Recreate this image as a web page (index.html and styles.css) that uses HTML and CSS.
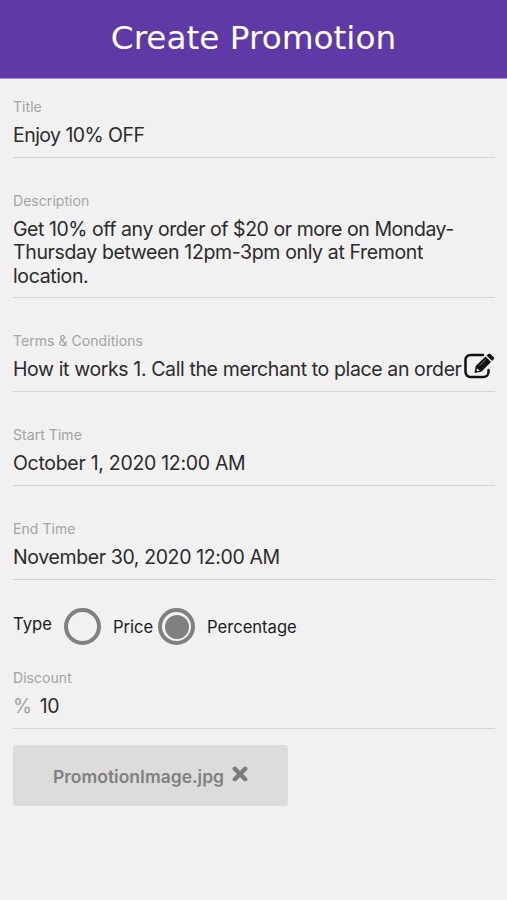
FILE: index.html
```html
<!DOCTYPE html>
<html lang="en">
<head>
  <meta charset="UTF-8" />
  <meta name="viewport" content="width=device-width, initial-scale=1.0"/>
  <title>Create Promotion</title>
  <link rel="stylesheet" href="styles.css">
</head>
<body>

<header class="header">
  <h1>Create Promotion</h1>
</header>

<main class="form">
  <div class="field title">
    <div class="label">Title</div>
    <div class="value">Enjoy 10% OFF</div>
  </div>

  <div class="field description">
    <div class="label">Description</div>
    <div class="value">Get 10% off any order of $20 or more on Monday-<br><span class="line">Thursday between 12pm-3pm only at Fremont<br>location.</span></div>
  </div>

  <div class="field terms">
    <div class="label">Terms &amp; Conditions</div>
    <div class="row">
      <div class="value">How it works 1. Call the merchant to place an order</div>
      <svg class="edit" width="32" height="26" viewBox="0 0 32 26">
        <path d="M20 2H7.5a5 5 0 0 0-5 5v12a5 5 0 0 0 5 5h13a5 5 0 0 0 5-5v-2" fill="none" stroke="#111" stroke-width="2.5" stroke-linecap="round"/>
        <path d="M11.5 20l1.2-7L22.5 3.5l5.5 5.5L18.3 18.7z" fill="#111"/>
        <path d="M23.6 2.5l1.8-1.6q1-.9 2 0l3.4 3.3q1 1 0 2L29.2 8z" fill="#111"/>
        <path d="M14 15.2l2.7 2.7-2.3.4-.8-.8z" fill="#f1f1f1"/>
        <path d="M16.5 12.7l6.3-6.3" stroke="#999" stroke-width=".8"/>
      </svg>
    </div>
  </div>

  <div class="field start">
    <div class="label">Start Time</div>
    <div class="value">October 1, 2020 12:00 AM</div>
  </div>

  <div class="field end">
    <div class="label">End Time</div>
    <div class="value">November 30, 2020 12:00 AM</div>
  </div>

  <div class="type">
    <span class="type-label">Type</span>
    <span class="radio"></span>
    <span class="option price">Price</span>
    <span class="radio checked"></span>
    <span class="option">Percentage</span>
  </div>

  <div class="field discount">
    <div class="label">Discount</div>
    <div class="value"><span class="percent">%</span>10</div>
  </div>

  <button class="file">
    <span>PromotionImage.jpg</span>
    <svg width="16" height="16" viewBox="0 0 16 16">
      <path d="M2.8 2.8l10.4 10.4M13.2 2.8L2.8 13.2" stroke="#7b7b7b" stroke-width="4.4" stroke-linecap="round"/>
    </svg>
  </button>
</main>

</body>
</html>
```
FILE: styles.css
```css
* {
  box-sizing: border-box;
}

body {
  margin: 0;
  background: #f1f1f1;
  color: #2b2b2b;
  font-family: Inter, "Liberation Sans", sans-serif;
}

.header {
  height: 79px;
  background: #5f3aa6;
  border-bottom: 1px solid #a98bd6;
  text-align: center;
}

.header h1 {
  margin: 0;
  padding-top: 19px;
  color: #fff;
  font: 32.7px/38px "DejaVu Sans", sans-serif;
}

.form {
  padding: 19px 12px 0 13px;
}

.field {
  border-bottom: 1px solid #d3d3d3;
  padding-bottom: 10px;
  margin-bottom: 34px;
}

.label {
  color: #a3a3a3;
  font-size: 14px;
  line-height: 18px;
  letter-spacing: 0.05px;
  margin-bottom: 8px;
}

.value {
  font-size: 19.5px;
  line-height: 23px;
  letter-spacing: -0.45px;
  white-space: nowrap;
}

.title .value {
  letter-spacing: -0.55px;
}

.description {
  padding-bottom: 9px;
}

.description .value {
  line-height: 23.4px;
}

.description .line {
  letter-spacing: -0.37px;
}

.row {
  display: flex;
  align-items: flex-start;
  height: 23px;
}

.row .value {
  width: 450px;
  letter-spacing: -0.38px;
}

.start .value {
  letter-spacing: -0.3px;
}

.end .value {
  letter-spacing: -0.38px;
}

.edit {
  flex: none;
  margin-top: -5px;
}

.type {
  display: flex;
  align-items: center;
  height: 37px;
  margin-top: -6px;
  margin-bottom: 24px;
  color: #1c1c1c;
  font-size: 16.6px;
}

.type-label {
  width: 51px;
  margin-bottom: 6px;
}

.radio {
  width: 37px;
  height: 37px;
  border: 4px solid #808080;
  border-radius: 50%;
}

.radio.checked {
  background: #808080;
  background-clip: content-box;
  padding: 2.5px;
}

.option {
  margin-left: 12px;
}

.price {
  width: 45px;
}

.discount {
  margin-bottom: 15.8px;
}

.percent {
  color: #a0a0a0;
  margin-right: 8px;
}

.file {
  display: flex;
  align-items: center;
  width: 275px;
  height: 61px;
  padding: 0 0 0 40px;
  border: none;
  border-radius: 3px;
  background: #dcdcdc;
  color: #808080;
  font: 600 17.5px/20px Inter, "Liberation Sans", sans-serif;
}

.file span {
  width: 179px;
  padding-top: 3px;
  text-align: left;
}

.file svg {
  margin-bottom: 3px;
}
```
